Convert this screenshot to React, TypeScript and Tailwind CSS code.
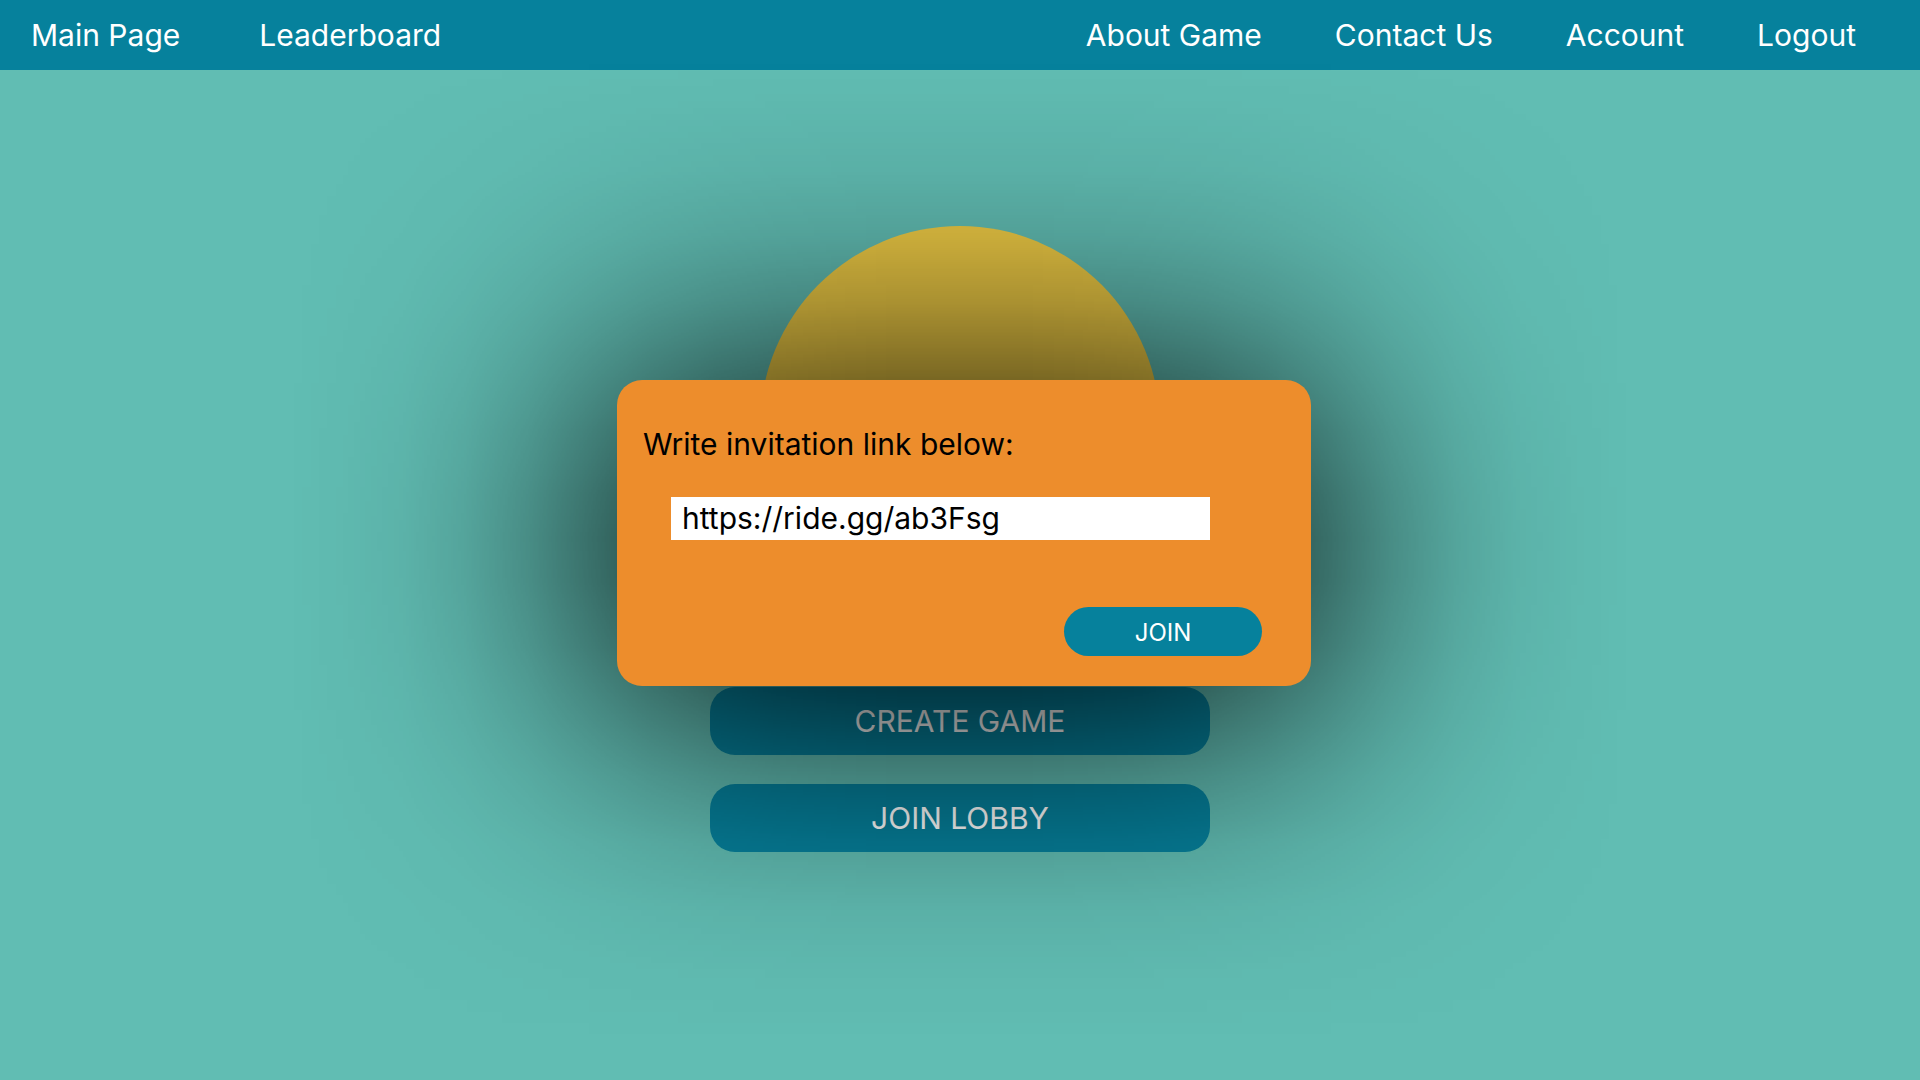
import React from "react";

export default function App() {
  const font = { fontFamily: "Inter, 'Noto Sans', sans-serif" };
  return (
    <div style={font} className="relative min-h-screen h-[1080px] w-full bg-[#61bdb3] flex flex-col overflow-hidden">
      <nav className="h-[70px] w-full bg-[#06819c] flex items-center justify-between text-white text-[30px] leading-[36px]">
        <div className="flex items-center pl-[31px] gap-[79px]">
          <span>Main Page</span>
          <span>Leaderboard</span>
        </div>
        <div className="flex items-center pr-[64px] gap-[73px]">
          <span>About Game</span>
          <span>Contact Us</span>
          <span>Account</span>
          <span>Logout</span>
        </div>
      </nav>

      <main className="relative flex-1 flex flex-col items-center pt-[156px]">
        <div className="w-[400px] h-[400px] rounded-full bg-[#eecb45]" />
        <div className="mt-[61px] flex flex-col gap-[29px]">
          <button className="w-[500px] h-[68px] rounded-[25px] bg-[#06819c] text-white text-[30px] leading-[36px]">
            CREATE GAME
          </button>
          <button className="w-[500px] h-[68px] rounded-[25px] bg-[#06819c] text-white text-[30px] leading-[36px]">
            JOIN LOBBY
          </button>
        </div>

        <div className="absolute z-20 left-[617px] top-[310px] w-[694px] h-[306px] rounded-[25px] bg-[#ed8d2c] pt-[46px] pl-[26px] pr-[49px] flex flex-col">
          <div className="text-black text-[30px] leading-[36px]">Write invitation link below:</div>
          <input
            readOnly
            defaultValue="https://ride.gg/ab3Fsg"
            style={font}
            className="mt-[35px] ml-[28px] w-[539px] h-[43px] bg-white text-black text-[30px] pl-[11px] outline-none border-0"
          />
          <div className="mt-[67px] flex justify-end">
            <button className="w-[198px] h-[49px] rounded-full bg-[#06819c] text-white text-[24px] leading-[30px] pt-[3px]">
              JOIN
            </button>
          </div>
        </div>
      </main>

      <div
        className="pointer-events-none absolute inset-0 z-10 bg-[linear-gradient(to_bottom,transparent_60px,rgba(0,0,0,0.023)_105px,rgba(0,0,0,0.067)_170px,rgba(0,0,0,0.15)_235px,rgba(0,0,0,0.28)_300px,rgba(0,0,0,0.45)_365px,rgba(0,0,0,0.63)_430px,rgba(0,0,0,0.77)_495px,rgba(0,0,0,0.81)_538px,rgba(0,0,0,0.793)_582px,rgba(0,0,0,0.676)_647px,rgba(0,0,0,0.496)_712px,rgba(0,0,0,0.309)_777px,rgba(0,0,0,0.159)_842px,rgba(0,0,0,0.067)_907px,rgba(0,0,0,0.023)_972px,transparent_1040px)] [mask-image:linear-gradient(to_right,transparent_290px,rgba(0,0,0,0.023)_340px,rgba(0,0,0,0.067)_402px,rgba(0,0,0,0.159)_465px,rgba(0,0,0,0.309)_527px,rgba(0,0,0,0.5)_590px,rgba(0,0,0,0.691)_652px,rgba(0,0,0,0.841)_715px,rgba(0,0,0,0.933)_777px,rgba(0,0,0,0.977)_840px,black_902px,black_1017px,rgba(0,0,0,0.977)_1080px,rgba(0,0,0,0.933)_1142px,rgba(0,0,0,0.841)_1205px,rgba(0,0,0,0.691)_1267px,rgba(0,0,0,0.5)_1330px,rgba(0,0,0,0.309)_1392px,rgba(0,0,0,0.159)_1455px,rgba(0,0,0,0.067)_1517px,rgba(0,0,0,0.023)_1580px,transparent_1630px)] [-webkit-mask-image:linear-gradient(to_right,transparent_290px,rgba(0,0,0,0.023)_340px,rgba(0,0,0,0.067)_402px,rgba(0,0,0,0.159)_465px,rgba(0,0,0,0.309)_527px,rgba(0,0,0,0.5)_590px,rgba(0,0,0,0.691)_652px,rgba(0,0,0,0.841)_715px,rgba(0,0,0,0.933)_777px,rgba(0,0,0,0.977)_840px,black_902px,black_1017px,rgba(0,0,0,0.977)_1080px,rgba(0,0,0,0.933)_1142px,rgba(0,0,0,0.841)_1205px,rgba(0,0,0,0.691)_1267px,rgba(0,0,0,0.5)_1330px,rgba(0,0,0,0.309)_1392px,rgba(0,0,0,0.159)_1455px,rgba(0,0,0,0.067)_1517px,rgba(0,0,0,0.023)_1580px,transparent_1630px)]"
      />
    </div>
  );
}
